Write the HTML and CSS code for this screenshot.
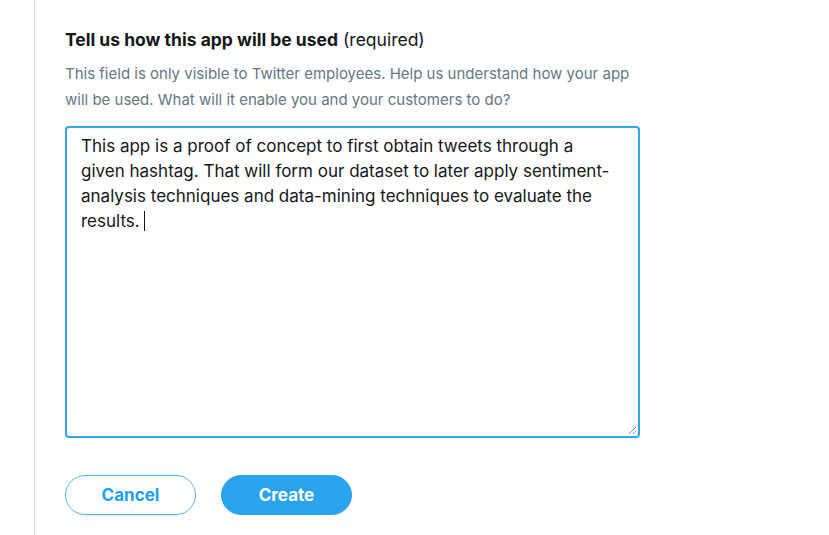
FILE: index.html
```html
<!DOCTYPE html>
<html>
<head>
<meta charset="utf-8">
<link rel="stylesheet" href="styles.css">
</head>
<body>
<div class="page">
  <div class="rail"></div>
  <div class="content">
    <h2 class="title"><strong>Tell us how this app will be used</strong> (required)</h2>
    <p class="desc">This field is only visible to Twitter employees. Help us understand how your app will be used. What will it enable you and your customers to do?</p>
    <div class="field">
      <div class="text">This app is a proof of concept to first obtain tweets through a given hashtag. That will form our dataset to later apply sentiment-analysis techniques and data-mining techniques to evaluate the results.<span class="caret"></span></div>
      <svg class="grip" width="9" height="9" viewBox="0 0 9 9"><path d="M8 1 L1 8 M8 5 L5 8" stroke="#888" stroke-width="1"/></svg>
    </div>
    <div class="actions">
      <button class="btn btn-outline">Cancel</button>
      <button class="btn btn-solid">Create</button>
    </div>
  </div>
</div>
</body>
</html>
```

FILE: styles.css
```css
html, body {
  margin: 0;
  padding: 0;
  background: #fff;
}
body {
  font-family: Inter, "Liberation Sans", sans-serif;
  color: #14171a;
}
.page {
  display: flex;
  height: 535px;
}
.rail {
  width: 1px;
  margin-left: 34px;
  background: #d3dee6;
}
.content {
  padding: 30px 0 0 30px;
  width: 575px;
}
.title {
  margin: 0;
  font-size: 17.5px;
  font-weight: normal;
  line-height: 20px;
}
.title strong {
  font-weight: 700;
}
.desc {
  margin: 11px 0 0;
  font-size: 15px;
  line-height: 26px;
  color: #657786;
}
.field {
  position: relative;
  box-sizing: border-box;
  margin-top: 13px;
  height: 312px;
  border: 2px solid #2ea6f2;
  border-radius: 4px;
  padding: 6px 22px 6px 14px;
}
.text {
  font-size: 17px;
  line-height: 25px;
  color: #14171a;
}
.caret {
  display: inline-block;
  width: 1px;
  height: 20px;
  background: #14171a;
  margin-left: 4px;
  vertical-align: -4px;
}
.grip {
  position: absolute;
  right: 1px;
  bottom: 1px;
}
.actions {
  display: flex;
  gap: 25px;
  margin-top: 37px;
}
.btn {
  width: 131px;
  height: 40px;
  border-radius: 20px;
  font-family: inherit;
  font-size: 17px;
  font-weight: 700;
  cursor: pointer;
}
.btn-outline {
  background: #fff;
  border: 1px solid #52b3f2;
  color: #1da1f2;
}
.btn-solid {
  background: #2aa3ef;
  border: 1px solid #2aa3ef;
  color: #fff;
}
```
